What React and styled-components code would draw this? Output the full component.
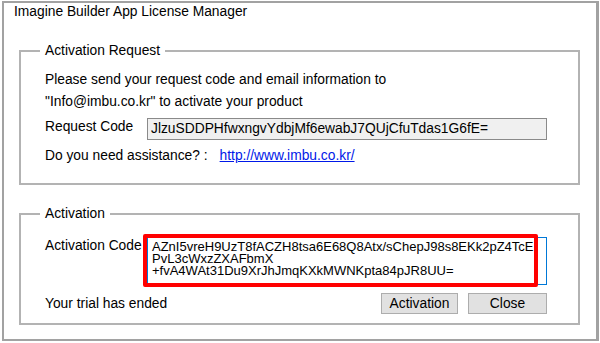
import React from "react";
import styled, { createGlobalStyle } from "styled-components";

const Global = createGlobalStyle`
  html, body { margin: 0; padding: 0; background: #ffffff; }
  body { font-family: "Liberation Sans", Arial, sans-serif; color: #000; }
`;

const Window = styled.div`
  box-sizing: border-box;
  margin: 1px 0 0 2px;
  width: 597px;
  height: 340px;
  border: 2px solid #a2a2a2;
  border-right-width: 3px;
  background: #fff;
  padding: 1px 16px 0 15px;
  display: flex;
  flex-direction: column;
`;

const Title = styled.div`
  font-size: 13.8px;
  line-height: 16px;
  margin-left: -5px;
`;

const Group = styled.fieldset`
  margin: ${(p) => p.$top}px 0 0 0;
  padding: 0 31px ${(p) => p.$bottom}px 24px;
  border: 2px solid #b3b3b3;
  min-width: 0;
`;

const Legend = styled.legend`
  font-size: 13.8px;
  line-height: 16px;
  padding: 0 5px;
  margin-left: -5px;
`;

const Body = styled.div`
  display: flex;
  flex-direction: column;
  padding-top: ${(p) => p.$top}px;
`;

const Line = styled.div`
  font-size: 13.8px;
  line-height: 22px;
  white-space: nowrap;
  margin-top: ${(p) => p.$mt || 0}px;
`;

const FieldRow = styled.div`
  display: flex;
  align-items: flex-start;
  margin-top: ${(p) => p.$mt || 0}px;
`;

const Label = styled.div`
  width: 102px;
  flex: none;
  font-size: 13.8px;
  line-height: 18px;
  white-space: nowrap;
`;

const CodeBox = styled.div`
  box-sizing: border-box;
  width: 404px;
  height: 22px;
  border: 1px solid #8a8a8a;
  background: #f0f0f0;
  font-size: 13.8px;
  line-height: 20px;
  padding: 0 3px;
  white-space: nowrap;
  overflow: hidden;
`;

const Link = styled.a`
  color: #0018e8;
  text-decoration: underline;
  margin-left: 12px;
`;

const AreaWrap = styled.div`
  position: relative;
  flex: none;
`;

const Area = styled.div`
  box-sizing: border-box;
  width: 400px;
  height: 48px;
  border: 1px solid #0078d7;
  background: #fff;
  font-size: 13px;
  line-height: 12px;
  padding: 3px 3px 0 4px;
  white-space: pre;
  overflow: hidden;
`;

const Highlight = styled.div`
  position: absolute;
  left: -4px;
  top: -3px;
  right: 9px;
  bottom: -2px;
  border: 4px solid #ff0000;
  border-radius: 2px;
  pointer-events: none;
`;

const BottomRow = styled.div`
  display: flex;
  align-items: center;
  margin-top: 8px;
  height: 21px;
`;

const Status = styled.div`
  flex: 1;
  font-size: 13.8px;
  line-height: 16px;
`;

const Button = styled.button`
  box-sizing: border-box;
  width: ${(p) => p.$w}px;
  height: 21px;
  margin-left: ${(p) => p.$ml || 0}px;
  border: 1px solid #adadad;
  background: #e1e1e1;
  font-family: "Liberation Sans", Arial, sans-serif;
  font-size: 13.8px;
  line-height: 19px;
  color: #000;
  padding: 0;
`;

const activationCode = [
  "AZnI5vreH9UzT8fACZH8tsa6E68Q8Atx/sChepJ98s8EKk2pZ4TcE",
  "PvL3cWxzZXAFbmX",
  "+fvA4WAt31Du9XrJhJmqKXkMWNKpta84pJR8UU=",
].join("\n");

export default function App() {
  return (
    <>
      <Global />
      <Window>
        <Title>Imagine Builder App License Manager</Title>
        <Group $top={23} $bottom={16}>
          <Legend>Activation Request</Legend>
          <Body $top={10}>
            <Line>Please send your request code and email information to</Line>
            <Line>"Info@imbu.co.kr" to activate your product</Line>
            <FieldRow $mt={5}>
              <Label>Request Code</Label>
              <CodeBox>JlzuSDDPHfwxngvYdbjMf6ewabJ7QUjCfuTdas1G6fE=</CodeBox>
            </FieldRow>
            <Line $mt={5}>
              Do you need assistance? :
              <Link href="#">http://www.imbu.co.kr/</Link>
            </Line>
          </Body>
        </Group>
        <Group $top={21} $bottom={9}>
          <Legend>Activation</Legend>
          <Body $top={15}>
            <FieldRow>
              <Label>Activation Code</Label>
              <AreaWrap>
                <Area>{activationCode}</Area>
                <Highlight />
              </AreaWrap>
            </FieldRow>
            <BottomRow>
              <Status>Your trial has ended</Status>
              <Button $w={77}>Activation</Button>
              <Button $w={79} $ml={10}>Close</Button>
            </BottomRow>
          </Body>
        </Group>
      </Window>
    </>
  );
}
